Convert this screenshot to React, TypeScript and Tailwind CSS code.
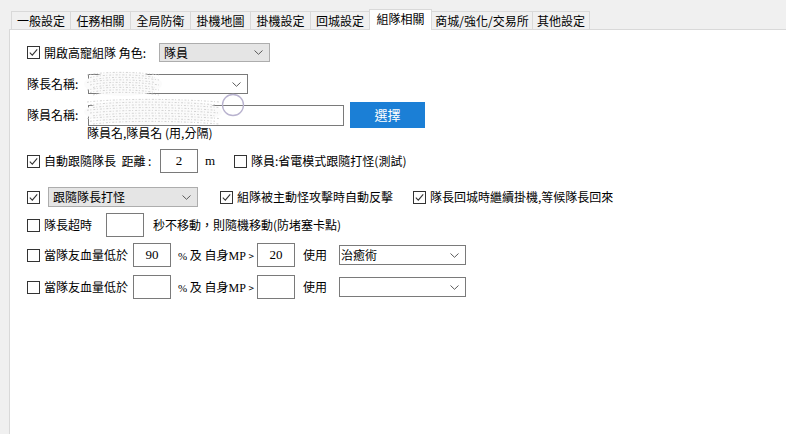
import React from "react";

const Cb = ({ checked }: { checked?: boolean }) => (
  <span className="w-[13px] h-[13px] border border-[#333333] bg-white flex items-center justify-center shrink-0">
    {checked && (
      <svg width="11" height="11" viewBox="0 0 11 11">
        <path d="M1.8 5.6 L4.3 8.1 L9.2 2.4" fill="none" stroke="#333333" strokeWidth="1.1" />
      </svg>
    )}
  </span>
);

const Chevron = () => (
  <svg width="9" height="5" viewBox="0 0 9 5" className="shrink-0">
    <path d="M0.5 0.5 L4.5 4.3 L8.5 0.5" fill="none" stroke="#5a5a5a" strokeWidth="1" />
  </svg>
);

const GraySelect = ({ w, text }: { w: string; text: string }) => (
  <div className={`${w} h-[20px] bg-[#e5e5e5] border border-[#adadad] flex items-center justify-between pl-[4px] pr-[6px]`}>
    <span>{text}</span>
    <Chevron />
  </div>
);

const Num = ({ v }: { v?: string }) => (
  <div className="w-[38px] h-[24px] border border-[#7a7a7a] bg-white flex items-center justify-center font-['Liberation_Serif',serif] text-[13px]">
    {v}
  </div>
);

const tabs = [
  { t: "一般設定", w: "w-[59px]" },
  { t: "任務相關", w: "w-[60px]" },
  { t: "全局防衛", w: "w-[60px]" },
  { t: "掛機地圖", w: "w-[60px]" },
  { t: "掛機設定", w: "w-[60px]" },
  { t: "回城設定", w: "w-[59px]" },
];

const Scribble = ({ w, h }: { w: number; h: number }) => {
  const lines: string[] = [];
  for (let i = 0; i < 9; i++) {
    const y = 3 + (i * (h - 6)) / 8;
    lines.push(`M${4 + (i % 3) * 3} ${y + 1} C${w * 0.3} ${y - 3} ${w * 0.7} ${y - 2} ${w - 4 - (i % 2) * 4} ${y + 1}`);
  }
  return (
    <svg width={w} height={h} viewBox={`0 0 ${w} ${h}`}>
      <ellipse cx={w / 2} cy={h / 2} rx={w / 2 - 1} ry={h / 2 - 1} fill="#fbfbfb" />
      <path d={lines.join(" ")} fill="none" stroke="#cfcfcf" strokeWidth="0.9" strokeDasharray="2 1.5 1 2" />
    </svg>
  );
};

export default function App() {
  return (
    <div className="w-[786px] h-[434px] bg-[#f0f0f0] overflow-hidden flex flex-col text-[12px] leading-[14px] text-black font-['Noto_Sans_CJK_TC','Noto_Sans_CJK_SC',sans-serif]">
      {/* tabs */}
      <div className="h-[29px] flex items-end pl-[11px] shrink-0">
        {tabs.map((x) => (
          <div
            key={x.t}
            className={`${x.w} h-[18px] border-l border-t border-[#d9d9d9] flex items-center justify-center`}
          >
            {x.t}
          </div>
        ))}
        <div className="w-[63px] h-[21px] border-l border-t border-r border-[#d9d9d9] bg-white flex items-center justify-center -mb-px relative z-10 pb-[2px]">
          組隊相關
        </div>
        <div className="w-[100px] h-[18px] border-t border-[#d9d9d9] flex items-center justify-center">
          商城/強化/交易所
        </div>
        <div className="w-[58px] h-[18px] border-l border-t border-r border-[#d9d9d9] flex items-center justify-center">
          其他設定
        </div>
      </div>

      {/* panel */}
      <div className="flex-1 ml-[9px] bg-white border-t border-l border-[#d9d9d9] relative flex flex-col pl-[17px] pt-[13px]">
        {/* row 1 */}
        <div className="flex items-center h-[19px]">
          <Cb checked />
          <span className="ml-[4px] w-[115px]">開啟高寵組隊 角色:</span>
          <div className="w-[111px] h-[19px] bg-[#e5e5e5] border border-[#adadad] flex items-center justify-between pl-[4px] pr-[6px]">
            <span>隊員</span>
            <Chevron />
          </div>
        </div>

        {/* row 2 */}
        <div className="flex items-center h-[20px] mt-[12px]">
          <span className="w-[61px]">隊長名稱:</span>
          <div className="w-[160px] h-[20px] border border-[#7a7a7a] bg-white flex items-center justify-end pr-[6px]">
            <Chevron />
          </div>
        </div>

        {/* row 3 */}
        <div className="flex items-center h-[26px] mt-[8px]">
          <span className="w-[61px]">隊員名稱:</span>
          <div className="w-[256px] h-[21px] border border-[#7a7a7a] bg-white" />
          <div className="ml-[6px] w-[75px] h-[26px] bg-[#1b7fd6] text-white text-[13px] flex items-center justify-center">
            選擇
          </div>
        </div>
        <div className="ml-[60px] -mt-[2px] h-[14px]">隊員名,隊員名 (用,分隔)</div>

        {/* row 4 */}
        <div className="flex items-center h-[24px] mt-[9px]">
          <Cb checked />
          <span className="ml-[4px] w-[116px]">自動跟隨隊長&nbsp; 距離 :</span>
          <Num v="2" />
          <span className="w-[36px] pl-[7px] font-['Liberation_Serif',serif] text-[13px]">m</span>
          <Cb />
          <span className="ml-[4px]">隊員:省電模式跟隨打怪(測試)</span>
        </div>

        {/* row 5 */}
        <div className="flex items-center h-[20px] mt-[14px]">
          <Cb checked />
          <div className="ml-[8px]">
            <GraySelect w="w-[150px]" text="跟隨隊長打怪" />
          </div>
          <div className="ml-[22px]">
            <Cb checked />
          </div>
          <span className="ml-[4px] w-[176px]">組隊被主動怪攻擊時自動反擊</span>
          <Cb checked />
          <span className="ml-[4px]">隊長回城時繼續掛機,等候隊長回來</span>
        </div>

        {/* row 6 */}
        <div className="flex items-center h-[24px] mt-[6px]">
          <Cb />
          <span className="ml-[4px] w-[62px]">隊長超時</span>
          <Num />
          <span className="ml-[9px]">秒不移動，則隨機移動(防堵塞卡點)</span>
        </div>

        {/* row 7 */}
        <div className="flex items-center h-[24px] mt-[6px]">
          <Cb />
          <span className="ml-[4px] w-[89px]">當隊友血量低於</span>
          <Num v="90" />
          <span className="w-[86px] pl-[7px]">
            <span className="font-['Liberation_Serif',serif] text-[11px]">%</span> 及 自身<span className="font-['Liberation_Serif',serif] text-[12px]">MP</span> <span className="text-[10px]">&gt;</span>
          </span>
          <Num v="20" />
          <span className="w-[44px] pl-[8px]">使用</span>
          <div className="w-[127px] h-[20px] border border-[#7a7a7a] bg-white flex items-center justify-between pl-[1px] pr-[6px]">
            <span>治癒術</span>
            <Chevron />
          </div>
        </div>

        {/* row 8 */}
        <div className="flex items-center h-[24px] mt-[8px]">
          <Cb />
          <span className="ml-[4px] w-[89px]">當隊友血量低於</span>
          <Num />
          <span className="w-[86px] pl-[7px]">
            <span className="font-['Liberation_Serif',serif] text-[11px]">%</span> 及 自身<span className="font-['Liberation_Serif',serif] text-[12px]">MP</span> <span className="text-[10px]">&gt;</span>
          </span>
          <Num />
          <span className="w-[44px] pl-[8px]">使用</span>
          <div className="w-[127px] h-[20px] border border-[#7a7a7a] bg-white flex items-center justify-end pr-[6px]">
            <Chevron />
          </div>
        </div>

        {/* scribble overlays */}
        <div className="absolute left-[73px] top-[41px]">
          <Scribble w={80} h={26} />
        </div>
        <div className="absolute left-[73px] top-[68px]">
          <Scribble w={140} h={28} />
        </div>
        <svg className="absolute left-[211px] top-[63px]" width="24" height="24" viewBox="0 0 24 24">
          <circle cx="12" cy="12" r="10.5" fill="none" stroke="#b9b3cf" strokeWidth="1.3" />
        </svg>
      </div>
    </div>
  );
}
